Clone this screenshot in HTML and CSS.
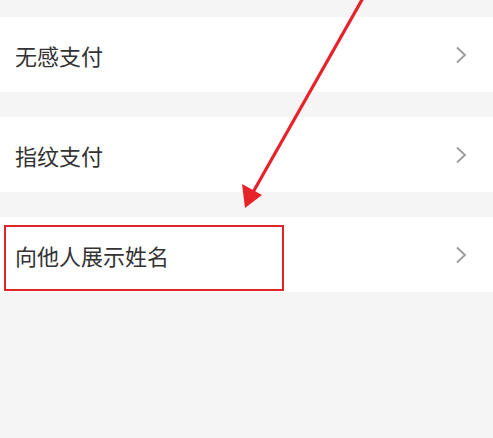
FILE: index.html
```html
<!DOCTYPE html>
<html lang="zh">
<head>
<meta charset="utf-8">
<link rel="stylesheet" href="styles.css">
</head>
<body>
<div class="list">
  <div class="row"><span class="label">无感支付</span><svg class="chev" viewBox="0 0 12 18"><path d="M2 1.5 L10 9 L2 16.5" /></svg></div>
  <div class="row"><span class="label">指纹支付</span><svg class="chev" viewBox="0 0 12 18"><path d="M2 1.5 L10 9 L2 16.5" /></svg></div>
  <div class="row highlight"><span class="label">向他人展示姓名</span><svg class="chev" viewBox="0 0 12 18"><path d="M2 1.5 L10 9 L2 16.5" /></svg><div class="mark"></div></div>
</div>
<svg class="arrow" viewBox="0 0 493 438" width="493" height="438">
  <line x1="363" y1="-2" x2="252" y2="194" />
  <polygon points="245,208 242,184 262,195" />
</svg>
</body>
</html>
```
FILE: styles.css
```css
html, body {
  margin: 0;
  padding: 0;
  background: #f5f5f5;
  width: 493px;
  height: 438px;
  overflow: hidden;
  position: relative;
  font-family: "Noto Sans CJK SC", "Noto Sans", sans-serif;
}
.list {
  padding-top: 17px;
  display: flex;
  flex-direction: column;
  gap: 25px;
}
.row {
  position: relative;
  height: 75px;
  background: #fff;
  display: flex;
  align-items: center;
  justify-content: space-between;
  padding: 0 26px 0 15px;
}
.label {
  font-size: 22px;
  color: #333;
  line-height: 1;
}
.chev {
  width: 12px;
  height: 18px;
}
.chev path {
  fill: none;
  stroke: #9a9a9a;
  stroke-width: 1.8;
}
.mark {
  position: absolute;
  left: 4px;
  top: 8px;
  width: 276px;
  height: 62px;
  border: 2px solid #e0242c;
}
.arrow {
  position: absolute;
  left: 0;
  top: 0;
}
.arrow line {
  stroke: #e8222a;
  stroke-width: 3.2;
}
.arrow polygon {
  fill: #e8222a;
}
```
